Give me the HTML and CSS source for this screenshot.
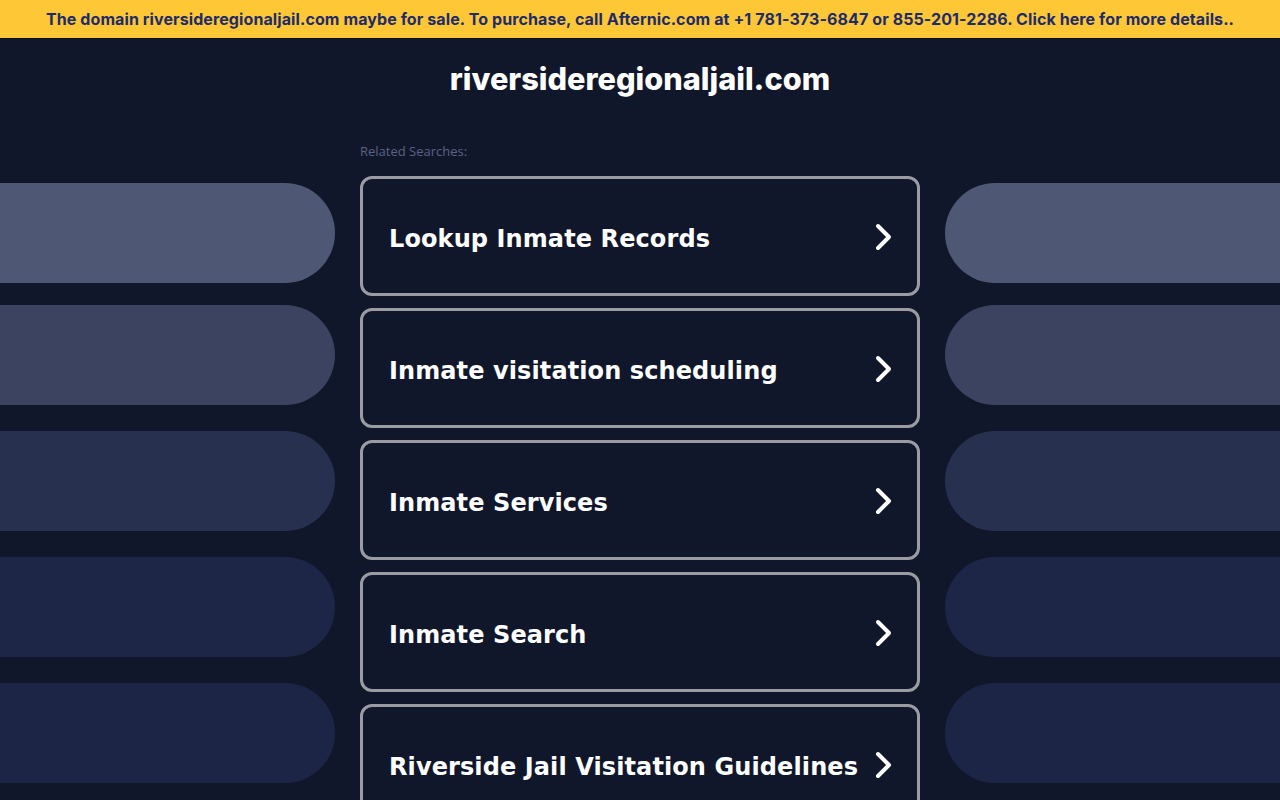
FILE: index.html
```html
<!DOCTYPE html>
<html lang="en">
<head>
<meta charset="utf-8">
<title>riversideregionaljail.com</title>
<link rel="stylesheet" href="styles.css">
</head>
<body>
<div class="banner">The domain riversideregionaljail.com maybe for sale. To purchase, call Afternic.com at +1 781-373-6847 or 855-201-2286. Click here for more details..</div>
<h1 class="title">riversideregionaljail.com</h1>
<div class="layout">
  <div class="side side-left">
    <div class="pill pill-1"></div>
    <div class="pill pill-2"></div>
    <div class="pill pill-3"></div>
    <div class="pill pill-4"></div>
    <div class="pill pill-5"></div>
  </div>
  <div class="center">
    <div class="related">Related Searches:</div>
    <div class="cards">
      <a class="card" href="#"><span class="card-text">Lookup Inmate Records</span><svg class="chev" width="20" height="28" viewBox="0 0 20 28"><polyline points="4,3 15,14 4,25" fill="none" stroke="#fff" stroke-width="4" stroke-linecap="round" stroke-linejoin="round"/></svg></a>
      <a class="card" href="#"><span class="card-text">Inmate visitation scheduling</span><svg class="chev" width="20" height="28" viewBox="0 0 20 28"><polyline points="4,3 15,14 4,25" fill="none" stroke="#fff" stroke-width="4" stroke-linecap="round" stroke-linejoin="round"/></svg></a>
      <a class="card" href="#"><span class="card-text">Inmate Services</span><svg class="chev" width="20" height="28" viewBox="0 0 20 28"><polyline points="4,3 15,14 4,25" fill="none" stroke="#fff" stroke-width="4" stroke-linecap="round" stroke-linejoin="round"/></svg></a>
      <a class="card" href="#"><span class="card-text">Inmate Search</span><svg class="chev" width="20" height="28" viewBox="0 0 20 28"><polyline points="4,3 15,14 4,25" fill="none" stroke="#fff" stroke-width="4" stroke-linecap="round" stroke-linejoin="round"/></svg></a>
      <a class="card" href="#"><span class="card-text">Riverside Jail Visitation Guidelines</span><svg class="chev" width="20" height="28" viewBox="0 0 20 28"><polyline points="4,3 15,14 4,25" fill="none" stroke="#fff" stroke-width="4" stroke-linecap="round" stroke-linejoin="round"/></svg></a>
    </div>
  </div>
  <div class="side side-right">
    <div class="pill pill-1"></div>
    <div class="pill pill-2"></div>
    <div class="pill pill-3"></div>
    <div class="pill pill-4"></div>
    <div class="pill pill-5"></div>
  </div>
</div>
</body>
</html>
```
FILE: styles.css
```css
html, body {
  margin: 0;
  padding: 0;
  background: #11172b;
  height: 800px;
  overflow: hidden;
}
.banner {
  height: 38px;
  background: #fdc736;
  color: #1d2b6b;
  font-family: Inter, "Open Sans", sans-serif;
  font-weight: 700;
  font-size: 16px;
  line-height: 38px;
  text-align: center;
  letter-spacing: 0.1px;
  white-space: nowrap;
  border-bottom: 1px solid #0b0f1c;
}
.title {
  margin: 0;
  height: 80px;
  line-height: 79px;
  text-align: center;
  color: #fff;
  font-family: Inter, "Open Sans", sans-serif;
  font-weight: 800;
  font-size: 30.7px;
  letter-spacing: 0;
}
.layout {
  display: grid;
  grid-template-columns: 335px 560px 335px;
  column-gap: 25px;
}
.side {
  display: flex;
  flex-direction: column;
  gap: 26px;
  padding-top: 64px;
}
.pill {
  height: 100px;
  flex: none;
}
.side-left .pill { border-radius: 0 50px 50px 0; }
.side-right .pill { border-radius: 50px 0 0 50px; }
.pill-1 { background: #4e5774; margin-bottom: -4px; }
.pill-2 { background: #3b4361; }
.pill-3 { background: #283050; }
.pill-4 { background: #1e2648; }
.pill-5 { background: #1c2546; }
.center {
  display: flex;
  flex-direction: column;
}
.related {
  font-family: "Open Sans", sans-serif;
  font-size: 13px;
  color: #5b6282;
  height: 57px;
  line-height: 26px;
  padding-top: 19px;
  box-sizing: border-box;
}
.cards {
  display: flex;
  flex-direction: column;
  gap: 12px;
}
.card {
  box-sizing: border-box;
  height: 120px;
  flex: none;
  border: 3px solid #9b9ca3;
  border-radius: 12px;
  display: flex;
  align-items: center;
  justify-content: space-between;
  padding: 5px 23px 0 26px;
  text-decoration: none;
  color: #fff;
}
.card-text {
  font-family: "DejaVu Sans", Verdana, sans-serif;
  font-weight: 700;
  font-size: 24px;
  letter-spacing: 0.1px;
  white-space: nowrap;
}
.chev {
  flex: none;
  display: block;
  margin-top: -3px;
}
```
